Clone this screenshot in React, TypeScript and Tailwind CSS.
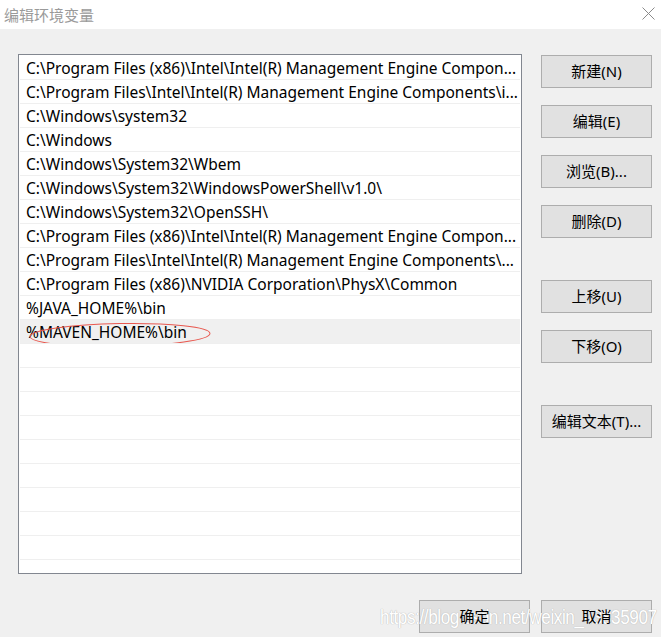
import React from "react";

const rows = [
  "C:\\Program Files (x86)\\Intel\\Intel(R) Management Engine Compon...",
  "C:\\Program Files\\Intel\\Intel(R) Management Engine Components\\i...",
  "C:\\Windows\\system32",
  "C:\\Windows",
  "C:\\Windows\\System32\\Wbem",
  "C:\\Windows\\System32\\WindowsPowerShell\\v1.0\\",
  "C:\\Windows\\System32\\OpenSSH\\",
  "C:\\Program Files (x86)\\Intel\\Intel(R) Management Engine Compon...",
  "C:\\Program Files\\Intel\\Intel(R) Management Engine Components\\...",
  "C:\\Program Files (x86)\\NVIDIA Corporation\\PhysX\\Common",
  "%JAVA_HOME%\\bin",
  "%MAVEN_HOME%\\bin",
];

const font = { fontFamily: '"Noto Sans", "Noto Sans CJK SC", sans-serif' };

function Btn({ label, className = "" }: { label: string; className?: string }) {
  return (
    <div
      className={
        "w-[111px] h-[33px] bg-[#e1e1e1] border border-[#adadad] flex items-center justify-center text-[15px] text-black " +
        className
      }
      style={font}
    >
      <span className="relative z-10">{label}</span>
    </div>
  );
}

export default function App() {
  const empty = Array.from({ length: 9 });
  return (
    <div className="w-[661px] h-[637px] flex flex-col overflow-hidden relative" style={font}>
      <div className="h-[29px] bg-white flex items-center justify-between pl-[4px] pr-[6px]">
        <span className="text-[15px] text-[#9a9a9a] leading-none" style={{ fontFamily: '"Noto Sans CJK SC", sans-serif' }}>
          编辑环境变量
        </span>
        <svg width="13" height="13" viewBox="0 0 13 13" className="mb-[3px]">
          <path d="M0.5 0.5 L12.5 12.5 M12.5 0.5 L0.5 12.5" stroke="#8a8a8a" strokeWidth="1" fill="none" />
        </svg>
      </div>
      <div className="flex-1 bg-[#f0f0f0] pt-[25px] pl-[18px] pr-[9px] flex flex-col">
        <div className="flex">
          <div className="w-[504px] h-[520px] bg-white border border-[#828790] pt-[1px] px-[1px] overflow-hidden">
            {rows.map((r, i) => (
              <div
                key={i}
                className={
                  "h-[24px] border-b border-[#efefef] flex items-center pl-[6px] pr-[2px] text-[15.5px] text-black whitespace-nowrap overflow-hidden relative " +
                  (i === 11 ? "bg-[#f0f0f0]" : "")
                }
              >
                <span className="relative top-[1px]">{r}</span>
                {i === 11 && (
                  <svg className="absolute left-[3px] top-[2px]" width="196" height="26" viewBox="0 0 196 26">
                    <ellipse cx="97" cy="13" rx="90" ry="11.5" stroke="#e8584f" strokeWidth="1" fill="none" transform="rotate(-1 97 13)" />
                  </svg>
                )}
              </div>
            ))}
            {empty.map((_, i) => (
              <div key={"e" + i} className="h-[24px] border-b border-[#efefef]" />
            ))}
          </div>
          <div className="ml-[19px] flex flex-col">
            <Btn label="新建(N)" className="mt-[1px]" />
            <Btn label="编辑(E)" className="mt-[17px]" />
            <Btn label="浏览(B)..." className="mt-[17px]" />
            <Btn label="删除(D)" className="mt-[17px]" />
            <Btn label="上移(U)" className="mt-[42px]" />
            <Btn label="下移(O)" className="mt-[17px]" />
            <Btn label="编辑文本(T)..." className="mt-[42px]" />
          </div>
        </div>
        <div className="flex justify-end gap-[11px] mt-[26px]">
          <Btn label="确定" />
          <Btn label="取消" />
        </div>
      </div>
      <div
        className="absolute left-[380px] top-[602px] text-[20px] text-white whitespace-nowrap pointer-events-none tracking-[-0.5px]"
        style={{
          fontFamily: '"Liberation Sans", Arial, sans-serif',
          textShadow: "0 0 1px #bbbbbb, 0 0 1px #bbbbbb",
          transform: "scaleX(0.86)",
          transformOrigin: "left",
        }}
      >
        https://blog.csdn.net/weixin_43835907
      </div>
    </div>
  );
}
